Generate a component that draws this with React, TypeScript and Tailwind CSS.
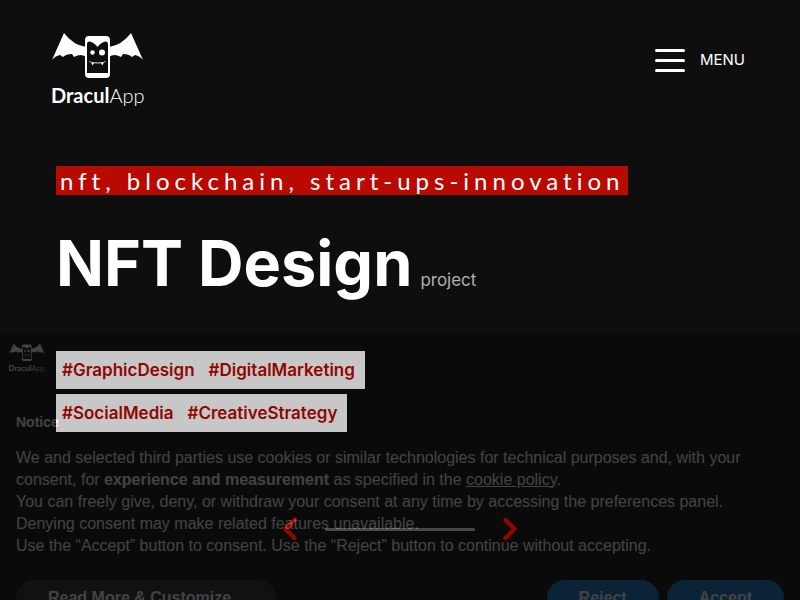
import { ChevronLeft, ChevronRight } from "lucide-react";

const tagRows = [
  ["#GraphicDesign", "#DigitalMarketing"],
  ["#SocialMedia", "#CreativeStrategy"],
];

function Logo({ className }: { className: string }) {
  return (
    <svg viewBox="0 0 92 78" className={className} role="img" aria-label="DraculApp">
      <g fill="#fff">
        <path d="M0 28 L12 1 Q21 13 34 15 V25 Q29 21 22 25 L20 22 Q14 22 11 25 L8 23 Q3 24 0 28Z" />
        <path d="M91 28 L79 1 Q70 13 57 15 V25 Q62 21 69 25 L71 22 Q77 22 80 25 L83 23 Q88 24 91 28Z" />
        <rect x="33" y="4" width="25" height="42" rx="4" />
      </g>
      <path d="M35 41 V12 Q35 9 38 9.500 Q43 11 45.500 15 Q48 11 53 9.500 Q56 9 56 12 V41Z" fill="#0e0e0e" />
      <circle cx="40.500" cy="20.500" r="2.200" fill="#fff" />
      <circle cx="50" cy="20.500" r="3" fill="#fff" />
      <path d="M37.500 29 L39 30.500 Q45.500 31.500 52 30.500 L53.500 29" fill="none" stroke="#fff" strokeWidth="0.900" />
      <path d="M39.500 31 H42 L40.700 33.500Z M49 31 H51.500 L50.300 33.500Z" fill="#fff" />
      <text x="-1" y="71" fill="#fff" fontSize="20" fontFamily="Lato, sans-serif">
        <tspan fontWeight="700">Dracul</tspan>
        <tspan fontWeight="300">App</tspan>
      </text>
    </svg>
  );
}

function CookieNotice() {
  return (
    <section
      aria-label="Notice"
      className="fixed inset-x-0 top-[334px] bg-black pt-[9px] font-['Liberation_Sans',sans-serif] text-white opacity-[0.22]"
    >
      <Logo className="ml-[9px] w-9 overflow-visible" />
      <div className="px-4 pt-[38px] pb-4">
        <h2 className="text-sm leading-5 font-bold">Notice</h2>
        <p className="mt-[15px] text-base leading-[22px]">
          We and selected third parties use cookies or similar technologies for technical purposes and, with your
          consent, for <strong>experience and measurement</strong> as specified in the{" "}
          <a href="#cookie-policy" className="underline">
            cookie policy
          </a>
          .<br />
          You can freely give, deny, or withdraw your consent at any time by accessing the preferences panel. Denying
          consent may make related features unavailable.
          <br />
          Use the “Accept” button to consent. Use the “Reject” button to continue without accepting.
        </p>
        <div className="mt-[23px] flex gap-2 font-bold">
          <button className="mr-auto h-9 w-[260px] rounded-full bg-[#212121] pl-8 text-left">
            Read More &amp; Customize
          </button>
          <button className="h-9 rounded-full bg-[#0073ce] px-8">Reject</button>
          <button className="h-9 rounded-full bg-[#0073ce] px-8">Accept</button>
        </div>
      </div>
    </section>
  );
}

export default function App() {
  return (
    <div className="min-h-screen bg-[#0e0e0e] font-[Inter,sans-serif] text-white">
      <header className="flex items-start justify-between pt-8 pr-[55px] pl-[52px]">
        <Logo className="w-[92px] overflow-visible" />
        <button className="mt-4 flex items-center gap-[15px] text-[15px] leading-6">
          <span className="flex flex-col gap-[7px]">
            <span className="h-[3px] w-[30px] rounded-full bg-white" />
            <span className="h-[3px] w-[30px] rounded-full bg-white" />
            <span className="h-[3px] w-[30px] rounded-full bg-white" />
          </span>
          MENU
        </button>
      </header>

      <main className="px-14 pt-14">
        <p className="w-fit bg-[#b80a00] px-1 font-[Lato,sans-serif] text-2xl leading-[29px] tracking-[5px]">
          nft, blockchain, start-ups-innovation
        </p>
        <div className="mt-8 flex items-baseline gap-2">
          <h1 className="text-[63px] leading-[73px] font-bold">NFT Design</h1>
          <span className="text-[17px] text-[#b0b0b0]">project</span>
        </div>
        <div className="mt-[51px] flex flex-col items-start gap-[5px] text-[17px] font-semibold text-[#b80a00]">
          {tagRows.map((row) => (
            <p key={row[0]} className="flex gap-3.5 bg-white pr-2.5 pl-1.5 leading-[38px]">
              {row.map((tag) => (
                <span key={tag}>{tag}</span>
              ))}
            </p>
          ))}
        </div>
      </main>

      <nav aria-label="Projects" className="mt-[79px] flex items-center justify-center gap-[17px] pb-10">
        <button aria-label="Previous" className="text-[#b80a00]">
          <ChevronLeft size={36} strokeWidth={3} />
        </button>
        <span className="h-[3px] w-[150px] rounded-full bg-[#5c5c5c]" />
        <button aria-label="Next" className="text-[#b80a00]">
          <ChevronRight size={36} strokeWidth={3} />
        </button>
      </nav>

      <CookieNotice />
    </div>
  );
}
